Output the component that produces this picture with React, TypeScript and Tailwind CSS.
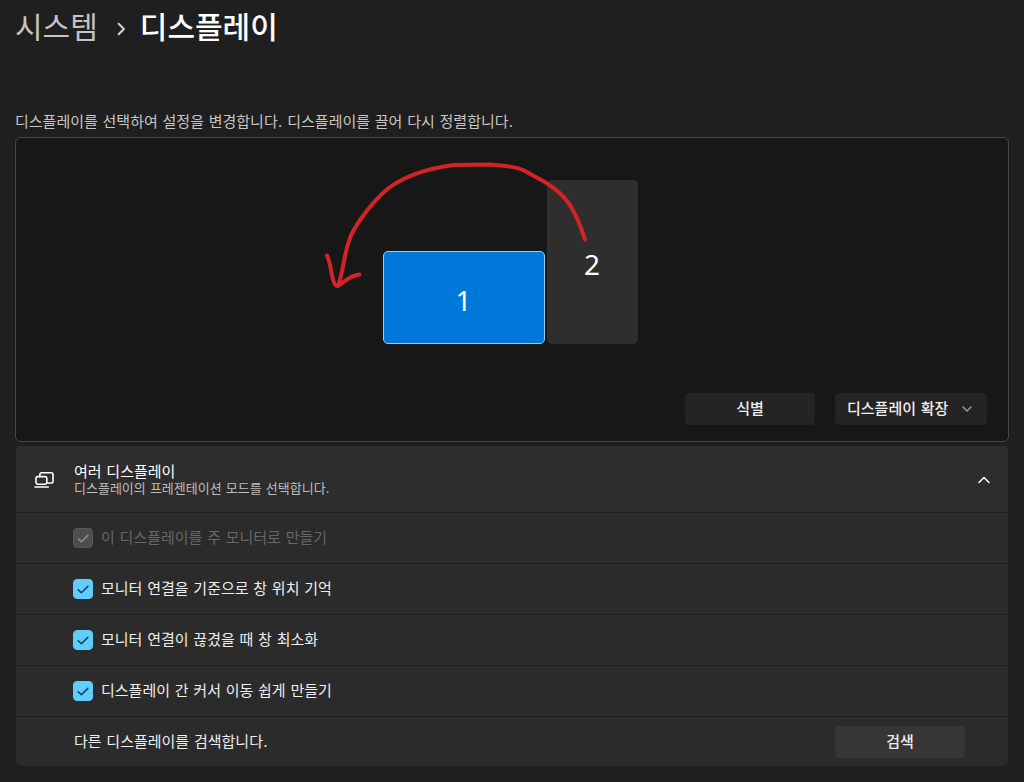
import React, { useState } from "react";

type Option = { id: string; label: string; disabled?: boolean };

const OPTIONS: Option[] = [
  { id: "main-display", label: "이 디스플레이를 주 모니터로 만들기", disabled: true },
  { id: "remember-windows", label: "모니터 연결을 기준으로 창 위치 기억" },
  { id: "minimize-windows", label: "모니터 연결이 끊겼을 때 창 최소화" },
  { id: "ease-cursor", label: "디스플레이 간 커서 이동 쉽게 만들기" },
];

function DisplaysIcon() {
  return (
    <svg
      viewBox="0 0 20 18"
      className="h-[18px] w-5 shrink-0"
      fill="none"
      stroke="currentColor"
      strokeWidth="1.6"
      strokeLinecap="round"
      aria-hidden="true"
    >
      <rect x="2" y="5.600" width="10.800" height="7.600" rx="1.600" />
      <path d="M5.900 5.400V3.500c0-1 .7-1.700 1.700-1.700h9.700c1 0 1.700.7 1.700 1.700v6.800c0 1-.7 1.700-1.700 1.700h-4.300" />
      <path d="M1 16h13.300" />
    </svg>
  );
}

function Chevron({ className, d, width = 1.5 }: { className: string; d: string; width?: number }) {
  return (
    <svg
      viewBox="0 0 12 12"
      className={className}
      fill="none"
      stroke="currentColor"
      strokeWidth={width}
      strokeLinecap="round"
      strokeLinejoin="round"
      aria-hidden="true"
    >
      <path d={d} />
    </svg>
  );
}

function OptionRow({ option }: { option: Option }) {
  const [checked, setChecked] = useState(true);
  return (
    <div className="flex h-[51px] items-center border-t border-[#1f1f1f] pl-[57px]">
      <span className="grid size-5 shrink-0 place-items-center">
        <input
          id={option.id}
          type="checkbox"
          checked={checked}
          disabled={option.disabled}
          onChange={(e) => setChecked(e.target.checked)}
          className="peer col-start-1 row-start-1 size-5 appearance-none rounded border border-[#9a9a9a] checked:border-[#60cdff] checked:bg-[#60cdff] disabled:border-[#575757] disabled:bg-[#4d4d4d]"
        />
        <svg
          viewBox="0 0 20 20"
          className="pointer-events-none invisible col-start-1 row-start-1 size-5 text-[#123b52] peer-checked:visible peer-disabled:text-[#8c8c8c]"
          fill="none"
          stroke="currentColor"
          strokeWidth="1.5"
          strokeLinecap="round"
          strokeLinejoin="round"
          aria-hidden="true"
        >
          <path d="M5.200 10.800l3.200 3 6.400-6.400" />
        </svg>
      </span>
      <label
        htmlFor={option.id}
        className={
          option.disabled
            ? "pl-2 text-[15px] leading-5 text-[#666666]"
            : "pl-2 text-[15px] leading-5 text-[#eeeeee]"
        }
      >
        {option.label}
      </label>
    </div>
  );
}

export default function App() {
  const [open, setOpen] = useState(true);
  const [selected, setSelected] = useState(1);

  return (
    <main className="min-h-screen bg-[#1f1f1f] px-[15px] pt-2 pb-4 font-['DejaVu_Sans','Noto_Sans_CJK_KR',sans-serif] text-white">
      <nav className="flex h-10 items-center text-[30px] leading-10" aria-label="탐색 경로">
        <a href="#system" className="text-[#c5c5c5]">시스템</a>
        <Chevron className="mr-3 ml-4 mt-0.5 size-3.5 text-[#d0d0d0]" d="M4 1.500L8.500 6 4 10.500" width={1.8} />
        <h1 className="font-medium">디스플레이</h1>
      </nav>

      <p className="mt-16 text-[15px] leading-5 text-[#c6c6c6]">
        디스플레이를 선택하여 설정을 변경합니다. 디스플레이를 끌어 다시 정렬합니다.
      </p>

      <section className="mt-[5px] rounded-md border border-[#484848] bg-[#171717] pt-[42px] pb-4">
        <div className="flex justify-center pr-1">
          <div className="relative flex items-end gap-0.5 font-['Noto_Sans',sans-serif] text-[28px] leading-9">
            <button
              type="button"
              onClick={() => setSelected(1)}
              className={
                selected === 1
                  ? "h-[93px] w-[162px] rounded-[5px] border border-[#9fc9ea] bg-[#0078d9] pt-1"
                  : "h-[93px] w-[162px] rounded-[5px] bg-[#2e2e2e] pt-1"
              }
            >
              1
            </button>
            <button
              type="button"
              onClick={() => setSelected(2)}
              className={
                selected === 2
                  ? "h-[164px] w-[91px] rounded-[5px] border border-[#9fc9ea] bg-[#0078d9] pt-1"
                  : "h-[164px] w-[91px] rounded-[5px] bg-[#2e2e2e] pt-1"
              }
            >
              2
            </button>
            <svg
              viewBox="320 155 280 140"
              className="pointer-events-none absolute -top-[25px] -left-[63px] h-[140px] w-[280px]"
              fill="none"
              stroke="#d22426"
              strokeWidth="4"
              strokeLinecap="round"
              strokeLinejoin="round"
              aria-hidden="true"
            >
              <path d="M585 239.500C580 224 573 207 564 197.500C559 191.500 552 186.500 544 181.500L524 170.500C517 167 506 165.500 490 164.500L454 165C423 169 402 178 388 188.500C372 202 353 227 349 241C344 254 343 274 338 286" />
              <path d="M327 255.500C332 265 331 282 336 285.500C340 288 346 276 359.500 274.500" />
            </svg>
          </div>
        </div>

        <div className="mt-[49px] flex justify-end gap-5 pr-[21px] text-[15px] font-medium text-[#eeeeee]">
          <button type="button" className="h-8 w-[130px] rounded bg-[#242424]">
            식별
          </button>
          <div className="grid w-[152px] items-center">
            <select
              aria-label="다중 디스플레이 모드"
              className="col-start-1 row-start-1 h-8 w-full appearance-none rounded bg-[#242424] pl-3"
            >
              <option>디스플레이 확장</option>
            </select>
            <Chevron
              className="pointer-events-none col-start-1 row-start-1 mr-3.5 size-3 justify-self-end text-[#9a9a9a]"
              d="M2 4l4 4 4-4"
            />
          </div>
        </div>
      </section>

      <section className="mt-1 mr-px ml-px overflow-hidden rounded-[5px] bg-[#2b2b2b]">
        <button
          type="button"
          aria-expanded={open}
          onClick={() => setOpen(!open)}
          className="flex h-[66px] w-full items-center bg-[#2d2d2d] px-[18px] pt-0.5 text-left"
        >
          <DisplaysIcon />
          <span className="flex flex-1 flex-col pl-5">
            <span className="text-[15px] leading-[18px]">여러 디스플레이</span>
            <span className="text-[13px] leading-4 text-[#bdbdbd]">
              디스플레이의 프레젠테이션 모드를 선택합니다.
            </span>
          </span>
          <Chevron className="size-3" d={open ? "M1 8.500L6 3.500 11 8.500" : "M1 3.500L6 8.500 11 3.500"} />
        </button>
        {open && (
          <>
            {OPTIONS.map((option) => (
              <OptionRow key={option.id} option={option} />
            ))}
            <div className="flex h-[50px] items-center justify-between border-t border-[#1f1f1f] pr-[43px] pl-[58px] text-[15px] leading-5 text-[#eeeeee]">
              <span>다른 디스플레이를 검색합니다.</span>
              <button type="button" className="h-8 w-[130px] rounded bg-[#363636] font-medium">
                검색
              </button>
            </div>
          </>
        )}
      </section>
    </main>
  );
}
